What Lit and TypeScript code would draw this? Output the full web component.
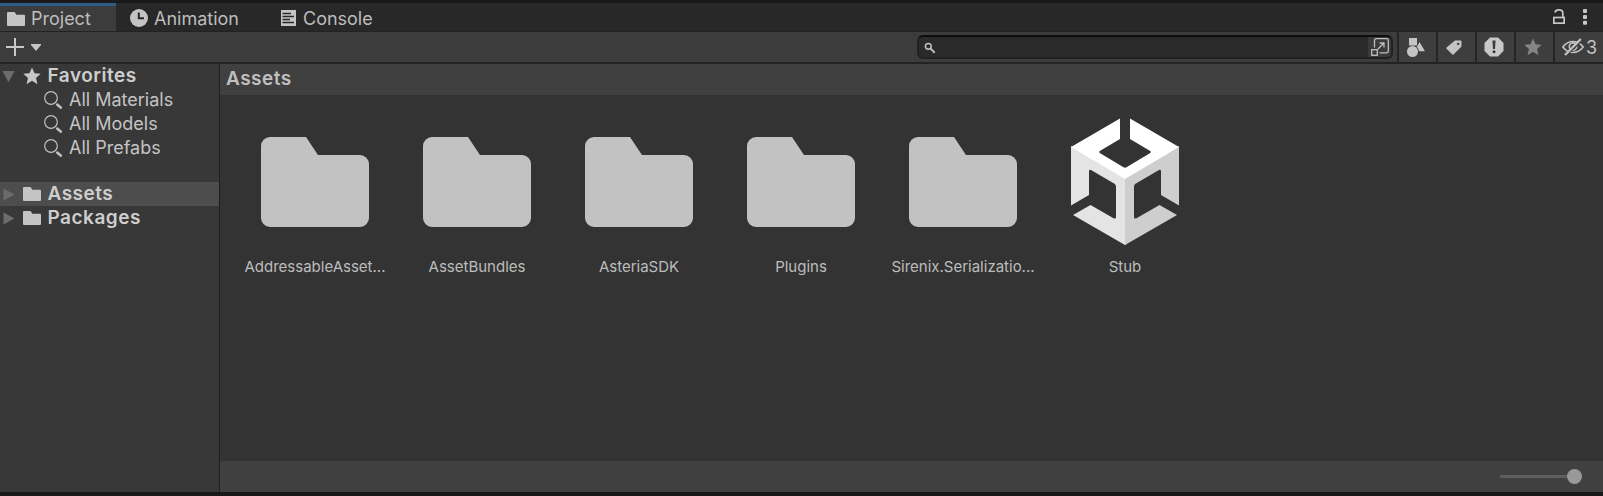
import { LitElement, html, css } from "lit";
import { customElement } from "lit/decorators.js";

const STAR = "M9 0.5 L11.5 6.3 L17.7 6.8 L13 11 L14.5 17.2 L9 13.8 L3.5 17.2 L5 11 L0.3 6.8 L6.5 6.3 Z";

const smallFolder = html`<svg width="18" height="14" viewBox="0 0 18 14">
  <path fill="#c4c4c4" d="M1 0 H7.6 L9.4 2.8 H17 Q18 2.8 18 3.8 V13 Q18 14 17 14 H1 Q0 14 0 13 V1 Q0 0 1 0 Z" />
</svg>`;

const bigFolder = html`<svg width="108" height="90" viewBox="0 0 108 90">
  <path fill="#c2c2c2" d="M9 0 H45 L57 18 H99 A9 9 0 0 1 108 27 V81 A9 9 0 0 1 99 90 H9 A9 9 0 0 1 0 81 V9 A9 9 0 0 1 9 0 Z" />
</svg>`;

const cube = html`<svg class="cube" width="108" height="128" viewBox="0 0 108 128">
  <path fill="#e4e4e4" d="M0 28 L54 59 L55 60 V126.700 L54 127 L2 97 L19.500 87 L43 100.500 Q45 101 45 99 V68.500 Q45 66.800 43.500 65.800 L20 52 Q18 51.300 18 53.300 V77 L0 87.500 Z" />
  <path fill="#cecece" d="M108 28 L54 59 V127 L106 97 L88.500 87 L65 100.500 Q63 101 63 99 V68.500 Q63 66.800 64.500 65.800 L88 52 Q90 51.300 90 53.300 V77 L108 87.500 Z" />
  <path fill="#fff" d="M49 0.500 V21 L28.800 33 Q27.600 34 28.800 35 L52.500 49.300 Q54 50.100 55.500 49.300 L79.200 35 Q80.400 34 79.200 33 L59 21 V0.500 L108 29 L54 61 L0 29 Z" />
</svg>`;

const searchGlyph = html`<svg width="18" height="18" viewBox="0 0 18 18" fill="none" stroke="#c0c0c0">
  <circle cx="7" cy="7" r="6.3" stroke-width="1.2" />
  <path d="M13.200 13.600 L16.700 16.600" stroke-width="2.600" stroke-linecap="round" />
</svg>`;

@customElement("app-root")
export class AppRoot extends LitElement {
  static styles = css`
    :host {
      display: flex;
      flex-direction: column;
      box-sizing: border-box;
      height: 496px;
      padding: 3px 0 4px;
      background: #191919;
      color: #c4c4c4;
      font: 18px/24px Inter, sans-serif;
      overflow: hidden;
      white-space: nowrap;
    }
    * { box-sizing: border-box; }
    svg { display: block; flex: none; }
    .tabs {
      display: flex;
      height: 29px;
      flex: none;
      background: #282828;
      border-bottom: 1px solid #222;
    }
    .tab { display: flex; align-items: center; color: #bdbdbd; }
    .tab span { padding-top: 2px; }
    .project { width: 116px; padding-left: 7px; gap: 6px; background: #3c3c3c; border-top: 3px solid #2c5d87; }
    .project span { padding-top: 1px; }
    .animation { width: 154px; padding: 2px 0 0 14px; gap: 6px; }
    .console { padding: 2px 0 0 11px; gap: 7px; }
    .corner { display: flex; margin-left: auto; padding: 6px 16px 0 0; gap: 18px; }
    .toolbar {
      display: flex;
      height: 32px;
      flex: none;
      background: #3c3c3c;
      border-bottom: 2px solid #232323;
    }
    .add { display: flex; align-items: center; gap: 7px; padding-left: 6px; }
    .search {
      display: flex;
      width: 476px;
      height: 24px;
      margin: 3px 4px 0 auto;
      border: 2px solid #212121;
      border-top-color: #0d0d0d;
      border-radius: 6px;
      background: #2a2a2a;
      overflow: hidden;
      justify-content: space-between;
    }
    .lens { margin: 5px 0 0 5px; }
    .picker { width: 25px; height: 21px; padding: 1px 0 0 3px; background: #3a3a3a; border-left: 2px solid #292929; }
    .btn {
      display: flex;
      align-items: center;
      justify-content: center;
      height: 30px;
      width: 39px;
      padding-right: 4px;
      background: #3e3e3e;
      border-left: 2px solid #252525;
    }
    .tag { padding-right: 5px; }
    .hidden { width: 50px; gap: 2px; justify-content: flex-start; padding: 0 0 0 7px; }
    .hidden span { padding-top: 2px; }
    .main { display: flex; flex: 1; min-height: 0; }
    .side { width: 220px; background: #383838; border-right: 1px solid #1e1e1e; }
    .row { display: flex; align-items: center; height: 24px; }
    .root { font-size: 19px; font-weight: 600; letter-spacing: 0.5px; color: #cecece; padding-left: 2px; }
    .root .arrow { width: 21px; }
    .root .icon { width: 24.500px; }
    .leaf { padding-left: 44px; gap: 7px; }
    .side .gap { height: 22px; }
    .selected { background: #4d4d4d; }
    .content { display: flex; flex: 1; flex-direction: column; background: #333; }
    .crumb { height: 31px; padding: 3px 0 0 6px; background: #404040; font-size: 19px; font-weight: 600; letter-spacing: 0.5px; color: #bfbfbf; }
    .grid { display: flex; flex: 1; padding: 22px 0 0 14px; }
    .item { width: 162px; text-align: center; font-size: 15px; color: #bdbdbd; }
    .art { display: flex; height: 130px; align-items: center; justify-content: center; }
    .label { margin-top: 8px; }
    .foot { display: flex; height: 31px; align-items: center; justify-content: flex-end; padding-right: 21px; background: #404040; }
    .track { width: 67px; height: 3px; background: #5e5e5e; }
    .thumb { width: 15px; height: 15px; border-radius: 50%; background: #999; }
  `;

  private root(name: string, open: boolean, selected = false) {
    return html`<div class="row root ${selected ? "selected" : ""}">
      <div class="arrow">
        <svg width="13" height="13" viewBox="0 0 13 13">
          <path fill="#6c6c6c" d=${open ? "M0.500 1 H12.500 L6.500 12.500 Z" : "M1.500 0.500 L12.500 6.500 L1.500 12.500 Z"} />
        </svg>
      </div>
      <div class="icon">
        ${open ? html`<svg width="18" height="18" viewBox="0 0 18 18"><path fill="#c8c8c8" d=${STAR} /></svg>` : smallFolder}
      </div>
      <span>${name}</span>
    </div>`;
  }

  render() {
    const items = ["AddressableAsset...", "AssetBundles", "AsteriaSDK", "Plugins", "Sirenix.Serializatio...", "Stub"];
    return html`
      <div class="tabs">
        <div class="tab project">${smallFolder}<span>Project</span></div>
        <div class="tab animation">
          <svg width="18" height="18" viewBox="0 0 18 18">
            <circle cx="9" cy="9" r="9" fill="#c4c4c4" />
            <path d="M8.800 3.500 V9.200 H14" fill="none" stroke="#282828" stroke-width="2" />
          </svg>
          <span>Animation</span>
        </div>
        <div class="tab console">
          <svg width="15" height="16" viewBox="0 0 15 16">
            <rect width="15" height="16" fill="#c4c4c4" />
            <path d="M1.500 3.500 H10 M1.500 6.500 H13 M1.500 9.500 H9 M1.500 12.500 H13" stroke="#282828" stroke-width="1.300" />
          </svg>
          <span>Console</span>
        </div>
        <div class="corner">
          <svg width="12" height="15" viewBox="0 0 12 15" fill="none" stroke="#c8c8c8" stroke-width="1.700">
            <rect x="0.850" y="8.500" width="10.300" height="5.650" />
            <path d="M2 3.500 Q2.500 0.900 6 0.900 Q9.800 0.900 9.800 4.200 V8" />
          </svg>
          <svg width="4" height="16" viewBox="0 0 4 16" fill="#c8c8c8">
            <rect y="0" width="4" height="4" rx="1" /><rect y="6" width="4" height="4" rx="1" /><rect y="11.800" width="4" height="4" rx="1" />
          </svg>
        </div>
      </div>
      <div class="toolbar">
        <div class="add">
          <svg width="18" height="18" viewBox="0 0 18 18"><path d="M9 0 V18 M0 9 H18" stroke="#c8c8c8" stroke-width="2" /></svg>
          <svg width="10" height="7" viewBox="0 0 10 7"><path d="M0 0 H10 V1 L5 7 L0 1 Z" fill="#c4c4c4" /></svg>
        </div>
        <div class="search">
          <svg class="lens" width="12" height="12" viewBox="0 0 12 12" fill="none" stroke="#c0c0c0">
            <circle cx="4.300" cy="4.300" r="2.900" stroke-width="1.500" />
            <path d="M6.600 6.600 L10.700 10.700" stroke-width="2" />
          </svg>
          <div class="picker">
            <svg width="18" height="18" viewBox="0 0 18 18" fill="none" stroke="#c0c0c0" stroke-width="1.300">
              <path d="M3.500 9.500 V2.500 Q3.500 0.700 5.300 0.700 H15.500 Q17.300 0.700 17.300 2.500 V13 Q17.300 14.800 15.500 14.800 H8.500" />
              <rect x="0.700" y="11.700" width="5.600" height="5.600" />
              <path d="M7 11 L12.700 5.300 M8.500 5 H13 V9.500" />
            </svg>
          </div>
        </div>
        <div class="btn">
          <svg width="18" height="19" viewBox="0 0 18 19" fill="#c4c4c4">
            <rect x="2" y="0" width="8" height="7.500" /><circle cx="5.500" cy="13.500" r="5.500" /><path d="M12.500 4 L18 13.300 H12 Q11.500 10 9.800 9 Z" />
          </svg>
        </div>
        <div class="btn tag">
          <svg width="16" height="15" viewBox="0 0 16 15">
            <path fill="#c4c4c4" fill-rule="evenodd" d="M9 0.500 H14.500 Q15.500 0.500 15.500 1.500 V6.500 L7.500 14.500 Q7 15 6.400 14.500 L0.500 8.700 Q0 8 0.500 7.500 Z M12.200 2.700 A1.200 1.200 0 1 0 12.200 5.100 A1.200 1.200 0 1 0 12.200 2.700 Z" />
          </svg>
        </div>
        <div class="btn">
          <svg width="20" height="20" viewBox="0 0 20 20">
            <path fill="#c8c8c8" d="M6 0.500 H14 L19.500 6 V14 L14 19.500 H6 L0.500 14 V6 Z" />
            <path fill="#3a3a3a" d="M8.500 3.500 H11.500 L11 12 H9 Z" /><circle cx="10" cy="14.800" r="1.500" fill="#3a3a3a" />
          </svg>
        </div>
        <div class="btn">
          <svg width="18" height="18" viewBox="0 0 18 18"><path fill="#858585" d=${STAR} /></svg>
        </div>
        <div class="btn hidden">
          <svg width="22" height="18" viewBox="0 0 22 18" fill="none" stroke="#c0c0c0">
            <path d="M0.800 9 Q5 3.500 11 3.500 Q17 3.500 21.200 9 Q17 14.500 11 14.500 Q5 14.500 0.800 9 Z" stroke-width="1.700" />
            <circle cx="11" cy="8.500" r="3.700" stroke-width="1.700" />
            <path d="M4.500 17.500 L20 2.500" stroke="#3e3e3e" stroke-width="1.500" />
            <path d="M3 17 L18.800 1" stroke-width="2.400" />
          </svg>
          <span>3</span>
        </div>
      </div>
      <div class="main">
        <div class="side">
          ${this.root("Favorites", true)}
          ${["All Materials", "All Models", "All Prefabs"].map((n) => html`<div class="row leaf">${searchGlyph}<span>${n}</span></div>`)}
          <div class="gap"></div>
          ${this.root("Assets", false, true)} ${this.root("Packages", false)}
        </div>
        <div class="content">
          <div class="crumb">Assets</div>
          <div class="grid">
            ${items.map((n) => html`<div class="item"><div class="art">${n === "Stub" ? cube : bigFolder}</div><div class="label">${n}</div></div>`)}
          </div>
          <div class="foot"><div class="track"></div><div class="thumb"></div></div>
        </div>
      </div>
    `;
  }
}
